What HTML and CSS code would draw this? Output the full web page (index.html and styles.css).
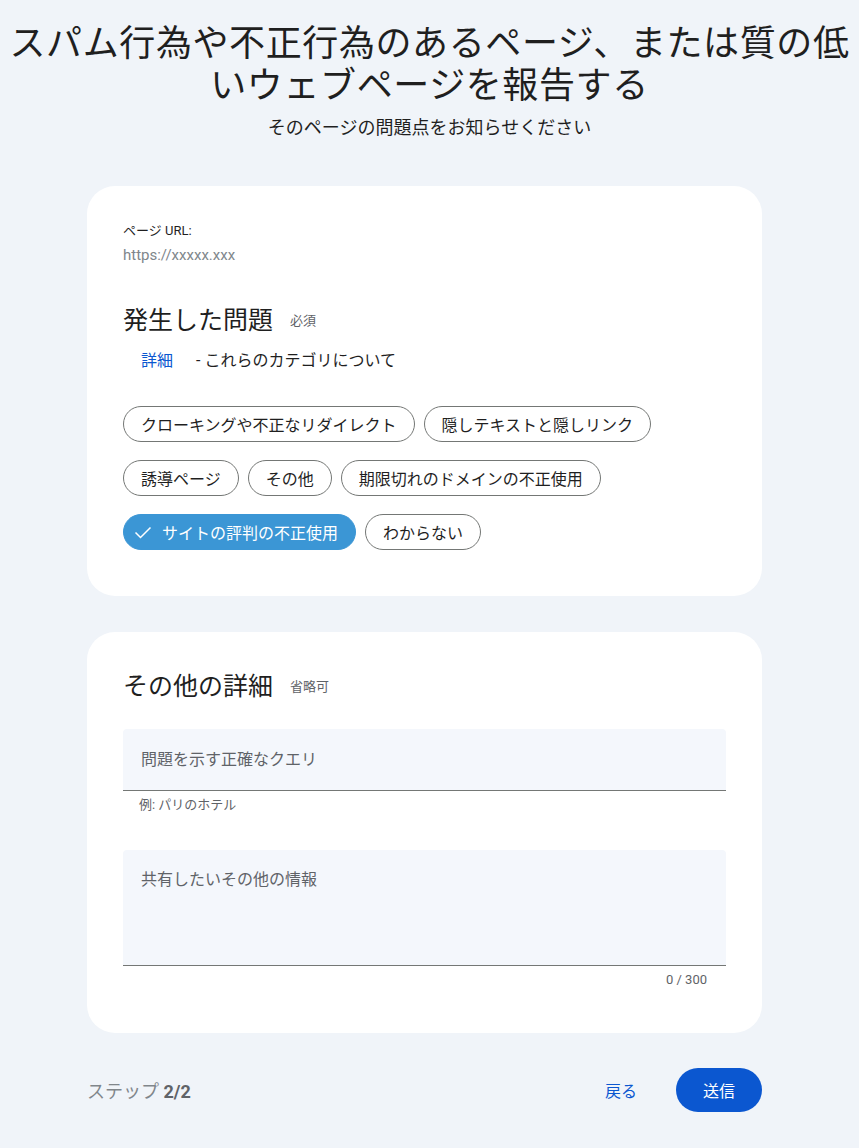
FILE: index.html
```html
<!DOCTYPE html>
<html lang="ja">
<head>
    <meta charset="UTF-8">
    <meta name="viewport" content="width=device-width, initial-scale=1.0">
    <title>スパム報告</title>
    <link rel="stylesheet" href="styles.css">
</head>
<body>

    <!-- Cabecera -->
    <header class="page-header">
        <h1>スパム行為や不正行為のあるページ、または質の低いウェブページを報告する</h1>
        <p class="subtitle">そのページの問題点をお知らせください</p>
    </header>

    <main class="content">
        <!-- Tarjeta 1: problema -->
        <section class="card">
            <div class="url-label">ページ URL:</div>
            <div class="url-value">https://xxxxx.xxx</div>

            <h2 class="card-title">発生した問題<span class="tag">必須</span></h2>
            <div class="details-row">
                <a class="link" href="#">詳細</a>
                <span>- これらのカテゴリについて</span>
            </div>

            <div class="chips">
                <button class="chip">クローキングや不正なリダイレクト</button>
                <button class="chip">隠しテキストと隠しリンク</button>
                <button class="chip">誘導ページ</button>
                <button class="chip">その他</button>
                <button class="chip">期限切れのドメインの不正使用</button>
                <button class="chip selected">
                    <svg class="check" viewBox="0 0 20 20" width="20" height="20">
                        <polyline points="2.5,10.5 7.5,15.5 17.5,5.5" fill="none" stroke="#fff" stroke-width="1.5"/>
                    </svg>
                    サイトの評判の不正使用
                </button>
                <button class="chip">わからない</button>
            </div>
        </section>

        <!-- Tarjeta 2: detalles -->
        <section class="card">
            <h2 class="card-title first">その他の詳細<span class="tag">省略可</span></h2>

            <div class="field">
                <div class="field-box">問題を示す正確なクエリ</div>
            </div>
            <div class="helper">例: パリのホテル</div>

            <div class="field area">
                <div class="field-box">共有したいその他の情報</div>
            </div>
            <div class="counter">0 / 300</div>
        </section>

        <!-- Pie -->
        <div class="footer">
            <div class="step">ステップ <b>2/2</b></div>
            <div class="actions">
                <a class="back" href="#">戻る</a>
                <button class="send">送信</button>
            </div>
        </div>
    </main>

</body>
</html>
```

FILE: styles.css
```css
body {
    margin: 0;
    background: #f0f4f9;
    color: #1f1f1f;
    font-family: Roboto, "Noto Sans CJK JP", sans-serif;
}

/* Cabecera */
.page-header {
    text-align: center;
    padding: 19px 8px 0;
}

.page-header h1 {
    margin: 0;
    font-size: 36px;
    line-height: 42px;
    font-weight: 400;
    letter-spacing: 0.6px;
    font-family: "Noto Sans CJK JP", sans-serif;
}

.subtitle {
    margin: 11px 0 0;
    font-size: 18px;
    line-height: 24px;
    color: #1f1f1f;
    font-family: "Noto Sans CJK JP", sans-serif;
}

/* Contenido */
.content {
    width: 675px;
    margin: 48px 0 0 87px;
}

.card {
    background: #fff;
    border-radius: 28px;
    padding: 36px;
    margin-bottom: 36px;
}

.url-label {
    font-size: 13px;
    line-height: 18px;
}

.url-value {
    margin-top: 4px;
    font-size: 15px;
    line-height: 22px;
    color: #80868b;
}

.card-title {
    margin: 34px 0 0;
    font-size: 25px;
    line-height: 32px;
    font-weight: 400;
    font-family: "Noto Sans CJK JP", sans-serif;
    display: flex;
    align-items: center;
}

.card-title.first {
    margin-top: -4px;
    line-height: 36px;
}

.tag {
    font-size: 13px;
    color: #5f6368;
    margin-left: 17px;
    padding-top: 4px;
}

.details-row {
    margin-top: 13px;
    padding-left: 18px;
    font-size: 16px;
    line-height: 24px;
    display: flex;
    gap: 23px;
}

.link {
    color: #0b57d0;
    text-decoration: none;
}

/* Chips */
.chips {
    margin-top: 33px;
    margin-bottom: 10px;
    display: flex;
    flex-wrap: wrap;
    gap: 18px 9px;
}

.chip {
    height: 36px;
    padding: 0 17px;
    border: 1px solid #747775;
    border-radius: 18px;
    background: #fff;
    color: #1f1f1f;
    font-size: 16px;
    font-family: "Noto Sans CJK JP", sans-serif;
    display: flex;
    align-items: center;
    cursor: pointer;
}

.chip.selected {
    background: #3b96d5;
    border-color: #3b96d5;
    color: #fff;
    padding-left: 9px;
    gap: 9px;
}

/* Campos */
.field {
    margin-top: 23px;
    background: #f4f7fc;
    border-radius: 4px 4px 0 0;
    border-bottom: 1px solid #747775;
    height: 61px;
}

.field-box {
    padding: 19px 18px 0;
    font-size: 16px;
    line-height: 24px;
    color: #5f6368;
}

.helper {
    margin-top: 5px;
    padding-left: 16px;
    font-size: 13px;
    line-height: 18px;
    color: #5f6368;
}

.field.area {
    margin-top: 36px;
    height: 115px;
}

.field.area .field-box {
    padding-top: 18px;
}

.counter {
    margin-top: 5px;
    padding-right: 19px;
    text-align: right;
    font-size: 13px;
    line-height: 18px;
    color: #5f6368;
    margin-bottom: 8px;
}

.card-title.first + .field {
    margin-top: 25px;
}

/* Pie */
.footer {
    display: flex;
    justify-content: space-between;
    align-items: center;
    margin-top: -1px;
}

.step {
    font-size: 18px;
    color: #80868b;
}

.step b {
    color: #5f6368;
}

.actions {
    display: flex;
    align-items: center;
    gap: 39px;
}

.back {
    color: #0b57d0;
    text-decoration: none;
    font-size: 16px;
}

.send {
    height: 44px;
    padding: 0 27px;
    border: none;
    border-radius: 22px;
    background: #0b57d0;
    color: #fff;
    font-size: 16px;
    font-family: "Noto Sans CJK JP", sans-serif;
    cursor: pointer;
}
```
